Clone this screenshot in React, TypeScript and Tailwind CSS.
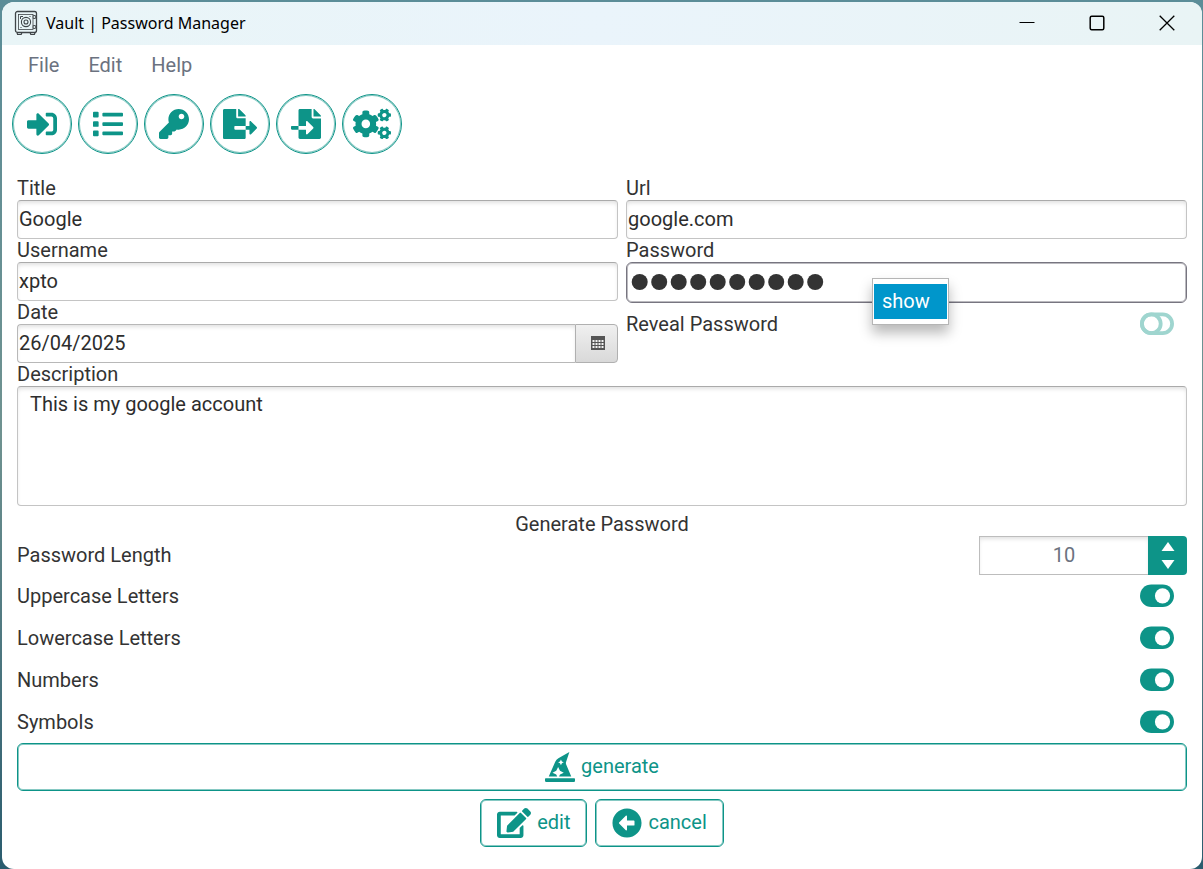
import { useState, type ReactNode } from "react";
import {
  FaSignInAlt,
  FaList,
  FaKey,
  FaFileExport,
  FaFileImport,
  FaCogs,
  FaHatWizard,
  FaEdit,
  FaArrowAltCircleLeft,
} from "react-icons/fa";

const fieldClass =
  "block h-[39px] w-full rounded border border-[#c4c4c4] border-t-[#aaaaaa] bg-white px-px pb-0.5 text-[#2d2d2d] shadow-[inset_0_3px_4px_-1px_rgba(0,0,0,0.12)] outline-none";

function VaultIcon() {
  return (
    <svg viewBox="0 0 24 26" className="h-[26px] w-6" fill="none" stroke="#3f4548" aria-hidden="true">
      <rect x="1.5" y="1.5" width="21" height="21" rx="2" strokeWidth="1.3" />
      <rect x="4.5" y="4.5" width="14.5" height="15" strokeWidth="0.8" />
      <path d="M6.5 9V6.5H9M16.5 6.5h-1M6.5 17.5h1" strokeWidth="1" />
      <circle cx="12" cy="12" r="4.6" strokeWidth="1.1" />
      <circle cx="12" cy="12" r="2" strokeWidth="1.1" />
      <path d="M19.2 5.5h2.2v3h-2.2zM19.2 15.5h2.2v3h-2.2z" strokeWidth="0.9" fill="#e9f5f7" />
      <path d="M3 22.8l.6 1.7h3.6l.6-1.7M16.2 22.8l.6 1.7h3.6l.6-1.7" strokeWidth="1.2" />
    </svg>
  );
}

function CalendarIcon() {
  return (
    <svg viewBox="0 0 14 14" className="size-[14px]" aria-hidden="true">
      <rect width="14" height="14" fill="#555" />
      {[4, 7, 10].map((y) =>
        [1, 4, 7, 10].map((x) => <rect key={`${x}-${y}`} x={x + 0.5} y={y} width="2" height="2" fill="#f2f2f2" />),
      )}
    </svg>
  );
}

function Field({ id, label, children }: { id: string; label: string; children: ReactNode }) {
  return (
    <div>
      <label htmlFor={id} className="block h-[23px] leading-[22px]">
        {label}
      </label>
      {children}
    </div>
  );
}

function Toggle({ id, label, initial }: { id: string; label: string; initial: boolean }) {
  const [on, setOn] = useState(initial);
  return (
    <div className="flex h-[42px] items-center justify-between pr-[13px]">
      <label htmlFor={id}>{label}</label>
      <span className="grid">
        <input
          id={id}
          type="checkbox"
          role="switch"
          checked={on}
          onChange={() => setOn(!on)}
          className="col-start-1 row-start-1 h-6 w-[34px] appearance-none rounded-full"
        />
        <svg viewBox="0 0 34 24" className="pointer-events-none col-start-1 row-start-1 h-6 w-[34px]" aria-hidden="true">
          {on ? (
            <>
              <rect y="0.5" width="34" height="22.6" rx="11.3" fill="#0d9488" />
              <circle cx="22.5" cy="11.8" r="7.6" fill="#fff" />
            </>
          ) : (
            <g fill="none" stroke="#9fd5cf" strokeWidth="3.8">
              <rect x="1.9" y="2.4" width="30.2" height="18.8" rx="9.4" />
              <circle cx="11.3" cy="11.8" r="9.4" />
            </g>
          )}
        </svg>
      </span>
    </div>
  );
}

const tools = [
  { name: "Sign in", icon: <FaSignInAlt size={30} /> },
  { name: "List", icon: <FaList size={30} /> },
  { name: "Key", icon: <FaKey size={30} /> },
  { name: "Export", icon: <FaFileExport size={34} /> },
  { name: "Import", icon: <FaFileImport size={30} /> },
  { name: "Settings", icon: <FaCogs size={38} /> },
];

const actionClass =
  "flex h-12 items-center justify-center gap-1.5 rounded-md border border-[#0d9488] bg-white text-[#0d9488] shadow-[inset_0_0_0_1px_rgba(13,148,136,0.5)]";

export default function App() {
  const [length, setLength] = useState(10);
  return (
    <div className="min-h-screen bg-linear-to-b from-[#5b8d98] via-[#6f9290] to-[#2a5c6e] pt-0.5 pr-px pl-0.5 font-['Roboto',sans-serif] text-[20px] leading-6 text-[#333]">
      <div className="flex min-h-[calc(100vh-2px)] flex-col overflow-hidden rounded-xl bg-white">
        <header className="flex h-[43px] items-center justify-between bg-linear-to-r from-[#e9f5f7] via-[#eaf4fb] to-[#e9f4f5] pb-0.5 pl-3 text-black">
          <div className="flex items-center gap-2">
            <VaultIcon />
            <h1 className="font-['Noto_Sans',sans-serif] text-[16px]">Vault | Password Manager</h1>
          </div>
          <div className="flex">
            <button aria-label="Minimize" className="grid h-10 w-[70px] place-items-center">
              <svg viewBox="0 0 16 16" className="size-4" stroke="currentColor">
                <path d="M0.5 7.5h15" />
              </svg>
            </button>
            <button aria-label="Maximize" className="grid h-10 w-[70px] place-items-center">
              <svg viewBox="0 0 16 16" className="size-4" fill="none" stroke="currentColor" strokeWidth="1.5">
                <rect x="1.2" y="1.2" width="13.6" height="13.6" rx="1.5" />
              </svg>
            </button>
            <button aria-label="Close" className="grid h-10 w-[70px] place-items-center">
              <svg viewBox="0 0 16 16" className="size-4" stroke="currentColor" strokeWidth="1.3">
                <path d="M0.7 0.7l14.6 14.6M15.3 0.7L0.7 15.3" />
              </svg>
            </button>
          </div>
        </header>

        <nav className="flex h-[42px] items-center gap-[29px] pb-0.5 pl-[26px] text-[#6b7280]">
          <button>File</button>
          <button>Edit</button>
          <button>Help</button>
        </nav>

        <div className="flex gap-1.5 px-2.5 pt-[7px] text-[#0d9488]">
          {tools.map((t) => (
            <button
              key={t.name}
              aria-label={t.name}
              className="grid size-[60px] place-items-center rounded-full border border-[#0d9488] shadow-[inset_0_0_0_1px_rgba(13,148,136,0.5)]"
            >
              {t.icon}
            </button>
          ))}
        </div>

        <main className="px-[15px] pt-[23px]">
          <div className="grid grid-cols-[601fr_561fr] gap-x-2">
            <div>
              <Field id="title" label="Title">
                <input id="title" defaultValue="Google" className={fieldClass} />
              </Field>
              <Field id="username" label="Username">
                <input id="username" defaultValue="xpto" className={fieldClass} />
              </Field>
              <Field id="date" label="Date">
                <div className="flex">
                  <input
                    id="date"
                    defaultValue="26/04/2025"
                    className="block h-[39px] min-w-0 flex-1 rounded-l border border-r-0 border-[#b8b8b8] bg-white px-px pb-0.5 text-[#2d2d2d] shadow-[inset_0_3px_4px_-1px_rgba(0,0,0,0.12)] outline-none"
                  />
                  <button
                    aria-label="Open calendar"
                    className="grid h-[39px] w-[43px] place-items-center rounded-r border border-[#b0b0b0] bg-linear-to-b from-[#f0f0f0] to-[#d9d9d9] pb-px pl-0.5"
                  >
                    <CalendarIcon />
                  </button>
                </div>
              </Field>
            </div>
            <div>
              <Field id="url" label="Url">
                <input id="url" defaultValue="google.com" className={fieldClass} />
              </Field>
              <Field id="password" label="Password">
                <div className="relative">
                  <div className="grid">
                    <input
                      id="password"
                      type="password"
                      defaultValue="abcdefghij"
                      className="col-start-1 row-start-1 block h-[41px] w-full rounded-md border border-[#777580] bg-white px-1 text-transparent shadow-[inset_0_0_0_1px_rgba(119,117,128,0.5)] outline-none"
                    />
                    <svg viewBox="0 0 196 20" className="pointer-events-none col-start-1 row-start-1 ml-1 h-5 w-[196px] self-center" fill="#333" aria-hidden="true">
                      {Array.from({ length: 10 }, (_, i) => (
                        <circle key={i} cx={9.7 + i * 19.5} cy="9" r="8" />
                      ))}
                    </svg>
                  </div>
                  <div className="absolute top-4 left-[246px] w-[77px] border border-[#b5b5b5] bg-white px-px py-[5px] shadow-[0_8px_12px_rgba(0,0,0,0.28)]" role="menu">
                    <button role="menuitem" className="block h-[35px] w-full bg-[#0096cb] pb-0.5 pl-2 text-left text-white">
                      show
                    </button>
                  </div>
                </div>
              </Field>
              <Toggle id="reveal" label="Reveal Password" initial={false} />
            </div>
          </div>

          <Field id="description" label="Description">
            <textarea
              id="description"
              defaultValue="This is my google account"
              className="block h-[120px] w-full resize-none rounded border border-[#c4c4c4] border-t-[#aaaaaa] bg-white px-3 py-[5px] text-[#2d2d2d] shadow-[inset_0_3px_4px_-1px_rgba(0,0,0,0.12)] outline-none"
            />
          </Field>

          <h2 className="pt-1.5 text-center">Generate Password</h2>

          <div className="flex h-[39px] items-center justify-between">
            <label htmlFor="length" className="pb-0.5">Password Length</label>
            <div className="flex">
              <input
                id="length"
                value={length}
                onChange={(e) => setLength(Number(e.target.value) || 0)}
                className="block h-[39px] w-[169px] border border-r-0 border-[#bdbdbd] bg-white pb-0.5 text-center text-[#6b7280] shadow-[inset_0_3px_4px_-1px_rgba(0,0,0,0.12)] outline-none"
              />
              <div className="flex h-[39px] w-[39px] flex-col rounded-r bg-[#0d9488] py-px">
                <button aria-label="Increase" onClick={() => setLength(length + 1)} className="grid flex-1 place-items-center">
                  <svg viewBox="0 0 14 9" className="h-[9px] w-[14px]" fill="#fff">
                    <path d="M7 0l6.5 9h-13z" />
                  </svg>
                </button>
                <button aria-label="Decrease" onClick={() => setLength(length - 1)} className="grid flex-1 place-items-center">
                  <svg viewBox="0 0 14 9" className="h-[9px] w-[14px]" fill="#fff">
                    <path d="M7 9l6.5-9h-13z" />
                  </svg>
                </button>
              </div>
            </div>
          </div>

          <Toggle id="uppercase" label="Uppercase Letters" initial />
          <Toggle id="lowercase" label="Lowercase Letters" initial />
          <Toggle id="numbers" label="Numbers" initial />
          <Toggle id="symbols" label="Symbols" initial />

          <button className={`${actionClass} w-full`}>
            <FaHatWizard size={30} />
            <span className="pb-0.5">generate</span>
          </button>
          <div className="flex justify-center gap-2 pt-2 pb-5">
            <button className={`${actionClass} px-4`}>
              <FaEdit size={34} />
              <span className="pb-0.5">edit</span>
            </button>
            <button className={`${actionClass} px-4`}>
              <FaArrowAltCircleLeft size={30} />
              <span className="pb-0.5">cancel</span>
            </button>
          </div>
        </main>
      </div>
    </div>
  );
}
